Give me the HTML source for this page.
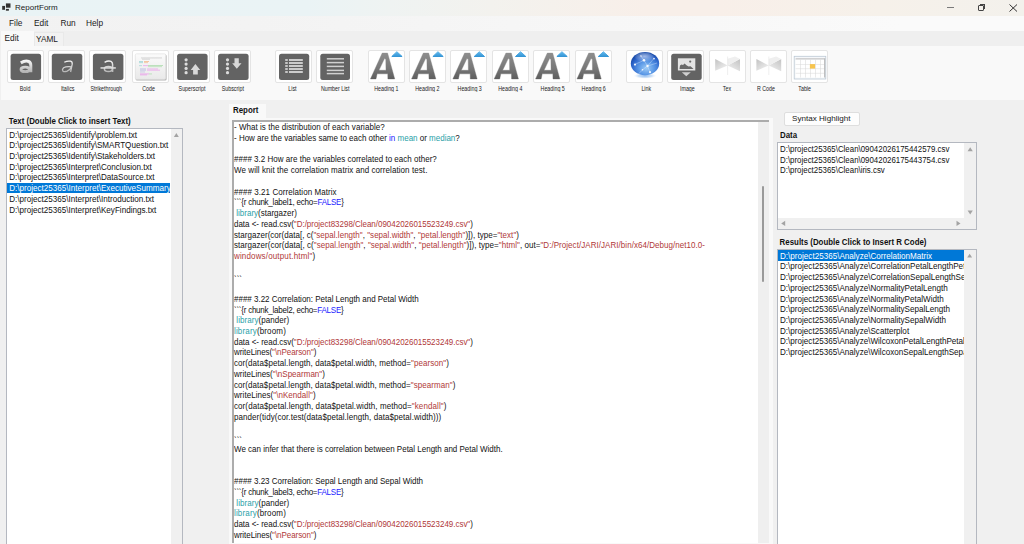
<!DOCTYPE html>
<html><head><meta charset="utf-8">
<style>
*{box-sizing:border-box;margin:0;padding:0}
html,body{width:1024px;height:544px;overflow:hidden;background:#f0f0f0;font-family:"Liberation Sans",sans-serif;color:#1a1a1a}
.a{position:absolute}
.t{position:absolute;white-space:pre;line-height:1}
#title{left:0;top:0;width:1024px;height:15.5px;background:linear-gradient(90deg,#e9f3f5 0%,#eaf3f5 30%,#eff3f2 38%,#f3f2ee 48%,#f8efe9 63%,#f8efe9 70%,#f6f1ea 86%,#f3f1ec 100%)}
#menu{left:0;top:15.5px;width:1024px;height:15px;background:linear-gradient(90deg,#f2f2f2 0%,#f3f3f3 25%,#f6f6f6 50%,#fafafa 88%,#fafafa 100%)}
#tabrow{left:0;top:30.5px;width:1024px;height:15px;background:#efefef}
#toolbar{left:1px;top:45.5px;width:1023px;height:54px;background:#f9f9f9}
.btn{position:absolute;top:50px;width:37px;height:33px;background:#fff;border:1px solid #e4e4e4;border-radius:2px}
.lbl{position:absolute;top:85.6px;font-size:5.3px;color:#1a1a1a;white-space:pre;line-height:1;transform:scaleY(1.2);transform-origin:0 0}
.ico{position:absolute;left:3px;top:3px;width:30.5px;height:27px;background:#636363;border-radius:2.5px}
.lb{position:absolute;background:#fff;border:1px solid #b4b8c0}
.item{position:absolute;left:2px;font-size:8.1px;white-space:pre;line-height:1;color:#1e1e1e}
.bold{font-weight:bold;font-size:7.9px;color:#111;transform:scaleY(1.1);transform-origin:0 6.7px}
.code{position:absolute;left:234px;font-size:8px;white-space:pre;line-height:1;color:#1e1e1e}
.s{color:#b03838}.k{color:#2222ff}.f{color:#2aa1a8}
</style></head><body>
<div id="title" class="a"></div>
<svg class="a" style="left:0;top:0" width="14" height="14"><rect x="5.9" y="3.4" width="4.6" height="4.3" fill="#333"/><rect x="2.2" y="5.9" width="2.8" height="3.9" fill="#333"/><rect x="5.9" y="8.9" width="3" height="1.8" fill="#333"/></svg>
<div class="t" style="left:15px;top:4px;font-size:8px;color:#1a1a1a">ReportForm</div>
<div class="a" style="left:947px;top:7px;width:7px;height:1px;background:#7a7a7a"></div>
<div class="a" style="left:978px;top:5px;width:6px;height:6px;border:1px solid #444;border-radius:1px"></div>
<div class="a" style="left:980px;top:4px;width:5px;height:5px;border-top:1px solid #444;border-right:1px solid #444"></div>
<svg class="a" style="left:1009px;top:4px" width="9" height="8"><path d="M0.5 0.5L8 7.5M8 0.5L0.5 7.5" stroke="#333" stroke-width="1"/></svg>

<div id="menu" class="a"></div>
<div class="t" style="left:9px;top:19.3px;font-size:8.3px">File</div>
<div class="t" style="left:34px;top:19.3px;font-size:8.3px">Edit</div>
<div class="t" style="left:60.5px;top:19.3px;font-size:8.3px">Run</div>
<div class="t" style="left:86px;top:19.3px;font-size:8.3px">Help</div>

<div id="tabrow" class="a"></div>
<div class="a" style="left:1px;top:31px;width:33px;height:15px;background:#f9f9f9"></div>
<div class="a" style="left:34px;top:32px;width:30px;height:14px;background:#f2f2f2;border:1px solid #e9e9e9;border-bottom:none"></div>
<div class="t" style="left:4.5px;top:33.6px;font-size:8.3px">Edit</div>
<div class="t" style="left:36px;top:34.8px;font-size:8.3px">YAML</div>

<div id="toolbar" class="a"></div>
<!-- TOOLBAR -->
<div class="btn" style="left:6.95px"></div>
<div class="lbl" style="left:19.8px">Bold</div>
<div class="btn" style="left:48.15px"></div>
<div class="lbl" style="left:60.9px">Italics</div>
<div class="btn" style="left:89.45px"></div>
<div class="lbl" style="left:90.5px">Strikethrough</div>
<div class="btn" style="left:131.85px"></div>
<div class="lbl" style="left:142.3px">Code</div>
<div class="btn" style="left:173.05px"></div>
<div class="lbl" style="left:178.6px">Superscript</div>
<div class="btn" style="left:214.45px"></div>
<div class="lbl" style="left:221.8px">Subscript</div>
<div class="btn" style="left:275.15px"></div>
<div class="lbl" style="left:288.3px">List</div>
<div class="btn" style="left:316.25px"></div>
<div class="lbl" style="left:320.9px">Number List</div>
<div class="btn" style="left:368.05px"></div>
<div class="lbl" style="left:374.3px">Heading 1</div>
<div class="btn" style="left:409.15px"></div>
<div class="lbl" style="left:415.3px">Heading 2</div>
<div class="btn" style="left:450.45px"></div>
<div class="lbl" style="left:457.6px">Heading 3</div>
<div class="btn" style="left:491.75px"></div>
<div class="lbl" style="left:498.2px">Heading 4</div>
<div class="btn" style="left:533.15px"></div>
<div class="lbl" style="left:540.6px">Heading 5</div>
<div class="btn" style="left:574.55px"></div>
<div class="lbl" style="left:581.6px">Heading 6</div>
<div class="btn" style="left:625.95px"></div>
<div class="lbl" style="left:641.4px">Link</div>
<div class="btn" style="left:667.35px"></div>
<div class="lbl" style="left:680px">Image</div>
<div class="btn" style="left:708.95px"></div>
<div class="lbl" style="left:722.8px">Tex</div>
<div class="btn" style="left:750.05px"></div>
<div class="lbl" style="left:757px">R Code</div>
<div class="btn" style="left:791.35px"></div>
<div class="lbl" style="left:798.3px">Table</div>
<svg class="a" style="left:0;top:0" width="1024" height="100" viewBox="0 0 1024 100">
<defs>
<linearGradient id="gw" x1="0" y1="0" x2="0" y2="1"><stop offset="0" stop-color="#fafafa"/><stop offset="1" stop-color="#b9b9b9"/></linearGradient>
<linearGradient id="gwu" gradientUnits="userSpaceOnUse" x1="0" y1="60" x2="0" y2="73"><stop offset="0" stop-color="#f8f8f8"/><stop offset="1" stop-color="#b0b0b0"/></linearGradient>
<linearGradient id="gA" gradientUnits="userSpaceOnUse" x1="0" y1="53" x2="0" y2="79"><stop offset="0" stop-color="#8e8e8e"/><stop offset="0.6" stop-color="#777"/><stop offset="1" stop-color="#5e5e5e"/></linearGradient>
<linearGradient id="gB" x1="0" y1="0" x2="0" y2="1"><stop offset="0" stop-color="#62b8ec"/><stop offset="1" stop-color="#3596d6"/></linearGradient>
<radialGradient id="gG" cx="0.55" cy="0.7" r="0.62"><stop offset="0" stop-color="#9ccaf6"/><stop offset="0.45" stop-color="#5a98e6"/><stop offset="0.85" stop-color="#2a62c8"/><stop offset="1" stop-color="#1c4fae"/></radialGradient>
<radialGradient id="gH" cx="0.5" cy="0.4" r="0.6"><stop offset="0" stop-color="#ffffff" stop-opacity="0.55"/><stop offset="1" stop-color="#ffffff" stop-opacity="0"/></radialGradient>
<radialGradient id="gS" cx="0.5" cy="0.5" r="0.5"><stop offset="0" stop-color="#8ab8ee"/><stop offset="0.6" stop-color="#b8d4f4" stop-opacity="0.7"/><stop offset="1" stop-color="#e8f0fa" stop-opacity="0"/></radialGradient>
<linearGradient id="gC" x1="0" y1="0" x2="0" y2="1"><stop offset="0" stop-color="#fbfbfb"/><stop offset="1" stop-color="#e9e9e9"/></linearGradient>
<linearGradient id="gT" x1="0" y1="0" x2="0.8" y2="1"><stop offset="0" stop-color="#c2c2c2"/><stop offset="1" stop-color="#f2f2f2"/></linearGradient>
<linearGradient id="gT2" x1="1" y1="0" x2="0.2" y2="1"><stop offset="0" stop-color="#c2c2c2"/><stop offset="1" stop-color="#f0f0f0"/></linearGradient>
</defs>
<rect x="10.6" y="53.7" width="30.50" height="26.3" rx="2.5" fill="#636363"/>
<g fill="none" stroke="url(#gwu)"><path d="M20.8 62.9 Q25.2 60.3 28.6 61.5 Q30.8 62.4 30.8 65.2 L30.8 72.2" stroke-width="3"/><ellipse cx="25.2" cy="69.4" rx="4.2" ry="2.2" stroke-width="2.8"/></g>
<rect x="51.8" y="53.7" width="30.50" height="26.3" rx="2.5" fill="#636363"/>
<g fill="none" stroke="url(#gwu)" stroke-width="1.3"><path d="M64.3 62.3 Q67.5 60.6 70.5 61.2 Q72.6 61.8 72.2 64.2 L70.6 72"/><path d="M71.4 66.8 Q66 66.3 63.6 67.8 Q61.8 69.3 62.8 70.9 Q64.2 72.2 67.2 71.1 Q70.2 69.8 71.2 67.5"/></g>
<rect x="92.9" y="53.7" width="30.50" height="26.3" rx="2.5" fill="#636363"/>
<g fill="none" stroke="url(#gwu)" stroke-width="1.5"><path d="M104.6 62.4 Q108 60.4 111 61.4 Q112.6 62.1 112.6 64.6 L112.6 72"/><ellipse cx="108.4" cy="69" rx="4" ry="2.5"/></g>
<rect x="100.5" y="67.2" width="15.3" height="1.5" fill="#e0e0e0"/>
<rect x="135.6" y="54.6" width="31" height="26" rx="1.5" fill="#b4b4b4"/>
<rect x="135.2" y="53.8" width="30.6" height="25.6" rx="1.5" fill="url(#gC)" stroke="#dadada" stroke-width="0.5"/>
<rect x="141" y="57.6" width="21" height="0.7" fill="#9a9a9a" opacity="0.5"/>
<rect x="142" y="58.8" width="8" height="0.7" fill="#a0a0a0" opacity="0.5"/>
<rect x="139" y="61.2" width="4" height="0.7" fill="#7cc8c8" opacity="0.8"/>
<rect x="139" y="62.4" width="4" height="0.7" fill="#7cc8c8" opacity="0.8"/>
<rect x="144" y="61.2" width="5" height="0.7" fill="#f0a060" opacity="0.8"/>
<rect x="144" y="62.4" width="4" height="0.7" fill="#f0a060" opacity="0.7"/>
<rect x="139" y="65.4" width="3" height="0.7" fill="#7cc8c8" opacity="0.7"/>
<rect x="143" y="65.4" width="5" height="0.7" fill="#e870e8" opacity="0.7"/>
<rect x="148" y="65.2" width="15" height="0.7" fill="#70c870" opacity="0.6"/>
<rect x="148" y="66.4" width="14" height="0.7" fill="#70c870" opacity="0.5"/>
<rect x="140" y="68.6" width="6" height="0.7" fill="#9a9ad8" opacity="0.7"/>
<rect x="140" y="69.8" width="6" height="0.7" fill="#9a9ad8" opacity="0.6"/>
<rect x="147" y="68.6" width="11" height="0.7" fill="#e870e8" opacity="0.6"/>
<rect x="147" y="69.8" width="13" height="0.7" fill="#e870e8" opacity="0.6"/>
<rect x="140" y="71.6" width="5" height="0.7" fill="#9a9ad8" opacity="0.6"/>
<rect x="140" y="73.6" width="9" height="0.7" fill="#e870e8" opacity="0.7"/>
<rect x="140" y="74.6" width="7" height="0.7" fill="#e870e8" opacity="0.6"/>
<rect x="149" y="73.6" width="3" height="0.7" fill="#80d080" opacity="0.6"/>
<rect x="177.1" y="53.7" width="30.50" height="26.3" rx="2.5" fill="#636363"/>
<circle cx="186.1" cy="59.8" r="1.6" fill="#dcdcdc"/>
<circle cx="186.1" cy="64.1" r="1.6" fill="#dcdcdc"/>
<circle cx="186.1" cy="68.4" r="1.6" fill="#dcdcdc"/>
<circle cx="186.1" cy="72.7" r="1.6" fill="#dcdcdc"/>
<path d="M195.4 64 L200.2 70 L197.8 70 L197.8 74.6 L193.1 74.6 L193.1 70 L190.7 70 Z" fill="#d8d8d8"/>
<rect x="218.1" y="53.7" width="30.50" height="26.3" rx="2.5" fill="#636363"/>
<circle cx="227.5" cy="59.8" r="1.6" fill="#dcdcdc"/>
<circle cx="227.5" cy="64.1" r="1.6" fill="#dcdcdc"/>
<circle cx="227.5" cy="68.4" r="1.6" fill="#dcdcdc"/>
<circle cx="227.5" cy="72.7" r="1.6" fill="#dcdcdc"/>
<path d="M234.5 58.2 L238.8 58.2 L238.8 63.3 L241.5 63.3 L236.8 68.8 L232.2 63.3 L234.5 63.3 Z" fill="#d8d8d8"/>
<rect x="279" y="53.7" width="30.20" height="26.3" rx="2.5" fill="#636363"/>
<rect x="285.2" y="59.1" width="2.6" height="1.8" fill="#d0d0d0"/>
<rect x="289" y="59.1" width="13.8" height="1.8" fill="#d8d8d8"/>
<rect x="285.2" y="62.1" width="2.6" height="1.8" fill="#d0d0d0"/>
<rect x="289" y="62.1" width="13.8" height="1.8" fill="#d8d8d8"/>
<rect x="285.2" y="65.1" width="2.6" height="1.8" fill="#d0d0d0"/>
<rect x="289" y="65.1" width="13.8" height="1.8" fill="#d8d8d8"/>
<rect x="285.2" y="68.1" width="2.6" height="1.8" fill="#d0d0d0"/>
<rect x="289" y="68.1" width="13.8" height="1.8" fill="#d8d8d8"/>
<rect x="285.2" y="71.1" width="2.6" height="1.8" fill="#d0d0d0"/>
<rect x="289" y="71.1" width="13.8" height="1.8" fill="#d8d8d8"/>
<rect x="320.3" y="53.7" width="29.70" height="26.3" rx="2.5" fill="#636363"/>
<rect x="326.8" y="58.05" width="17.2" height="1.5" fill="#d0d0d0"/>
<rect x="326.8" y="61.85" width="17.2" height="1.5" fill="#d0d0d0"/>
<rect x="326.8" y="65.65" width="17.2" height="1.5" fill="#d0d0d0"/>
<rect x="326.8" y="69.65" width="17.2" height="1.5" fill="#d0d0d0"/>
<rect x="326.8" y="72.85" width="17.2" height="1.5" fill="#d0d0d0"/>
<g transform="translate(-0.10,0)"><path fill-rule="evenodd" fill="url(#gA)" stroke="url(#gA)" stroke-width="0.4" stroke-linejoin="round" d="M370.6 78.9 L382.3 53.1 L387.7 53.1 L394.8 78.9 L388 78.9 L387.9 73.8 L377.2 73.8 L376.1 78.9 Z M379 70.3 L386.1 70.3 L385.9 59.2 L384.6 58.6 Z"/><path fill="url(#gB)" stroke="url(#gB)" stroke-width="1" stroke-linejoin="round" d="M396.95 51.7 L402.2 56.5 L391.9 56.5 Z"/></g>
<g transform="translate(41.00,0)"><path fill-rule="evenodd" fill="url(#gA)" stroke="url(#gA)" stroke-width="0.4" stroke-linejoin="round" d="M370.6 78.9 L382.3 53.1 L387.7 53.1 L394.8 78.9 L388 78.9 L387.9 73.8 L377.2 73.8 L376.1 78.9 Z M379 70.3 L386.1 70.3 L385.9 59.2 L384.6 58.6 Z"/><path fill="url(#gB)" stroke="url(#gB)" stroke-width="1" stroke-linejoin="round" d="M396.95 51.7 L402.2 56.5 L391.9 56.5 Z"/></g>
<g transform="translate(82.30,0)"><path fill-rule="evenodd" fill="url(#gA)" stroke="url(#gA)" stroke-width="0.4" stroke-linejoin="round" d="M370.6 78.9 L382.3 53.1 L387.7 53.1 L394.8 78.9 L388 78.9 L387.9 73.8 L377.2 73.8 L376.1 78.9 Z M379 70.3 L386.1 70.3 L385.9 59.2 L384.6 58.6 Z"/><path fill="url(#gB)" stroke="url(#gB)" stroke-width="1" stroke-linejoin="round" d="M396.95 51.7 L402.2 56.5 L391.9 56.5 Z"/></g>
<g transform="translate(123.60,0)"><path fill-rule="evenodd" fill="url(#gA)" stroke="url(#gA)" stroke-width="0.4" stroke-linejoin="round" d="M370.6 78.9 L382.3 53.1 L387.7 53.1 L394.8 78.9 L388 78.9 L387.9 73.8 L377.2 73.8 L376.1 78.9 Z M379 70.3 L386.1 70.3 L385.9 59.2 L384.6 58.6 Z"/><path fill="url(#gB)" stroke="url(#gB)" stroke-width="1" stroke-linejoin="round" d="M396.95 51.7 L402.2 56.5 L391.9 56.5 Z"/></g>
<g transform="translate(165.00,0)"><path fill-rule="evenodd" fill="url(#gA)" stroke="url(#gA)" stroke-width="0.4" stroke-linejoin="round" d="M370.6 78.9 L382.3 53.1 L387.7 53.1 L394.8 78.9 L388 78.9 L387.9 73.8 L377.2 73.8 L376.1 78.9 Z M379 70.3 L386.1 70.3 L385.9 59.2 L384.6 58.6 Z"/><path fill="url(#gB)" stroke="url(#gB)" stroke-width="1" stroke-linejoin="round" d="M396.95 51.7 L402.2 56.5 L391.9 56.5 Z"/></g>
<g transform="translate(206.40,0)"><path fill-rule="evenodd" fill="url(#gA)" stroke="url(#gA)" stroke-width="0.4" stroke-linejoin="round" d="M370.6 78.9 L382.3 53.1 L387.7 53.1 L394.8 78.9 L388 78.9 L387.9 73.8 L377.2 73.8 L376.1 78.9 Z M379 70.3 L386.1 70.3 L385.9 59.2 L384.6 58.6 Z"/><path fill="url(#gB)" stroke="url(#gB)" stroke-width="1" stroke-linejoin="round" d="M396.95 51.7 L402.2 56.5 L391.9 56.5 Z"/></g>
<ellipse cx="645" cy="75.8" rx="11.5" ry="3" fill="url(#gS)"/>
<ellipse cx="645" cy="63.6" rx="14.2" ry="11.7" fill="url(#gG)"/>
<ellipse cx="644.5" cy="57.3" rx="9.5" ry="4.8" fill="url(#gH)"/>
<path d="M634.5 64.6 L644 60.3 L647.5 66 L653.8 58.6 M644 60.3 L640.5 55.5 M647.5 66 L650 72.2 M647.5 66 L642.5 69.8 L638.5 74 M647.5 66 L657 63" stroke="#e4f0ff" stroke-width="0.5" fill="none" opacity="0.75"/>
<circle cx="644" cy="60.3" r="1.3" fill="#ffffff" opacity="0.9"/>
<circle cx="647.5" cy="66" r="1.2" fill="#ffffff" opacity="0.9"/>
<circle cx="635" cy="64.6" r="1.1" fill="#ffffff" opacity="0.9"/>
<circle cx="650" cy="72.2" r="1.1" fill="#ffffff" opacity="0.9"/>
<circle cx="654" cy="58.6" r="0.9" fill="#ffffff" opacity="0.9"/>
<circle cx="641" cy="56" r="0.7" fill="#ffffff" opacity="0.9"/>
<circle cx="642.5" cy="69.8" r="0.8" fill="#ffffff" opacity="0.9"/>
<rect x="671.2" y="53.7" width="30.50" height="26.3" rx="2.5" fill="#636363"/>
<rect x="677.9" y="58.3" width="17.4" height="12.2" fill="#e4e4e4"/>
<path d="M679.5 69 L680 65.5 L681.5 64.4 L683 65 L684.6 63.5 L686.5 65.3 L688.5 66.5 L690.5 66.3 L692.5 68 L693.5 69 Z" fill="#6a6a6a"/>
<circle cx="690.2" cy="61.6" r="1.1" fill="#6a6a6a"/>
<path d="M681.8 72.2 L690.8 72.2 L686.3 76.3 Z" fill="#cfcfcf"/>
<g transform="translate(0,0)"><path d="M715.2 59 L727.6 65.4 L715.2 70.8 Z" fill="url(#gT)"/><path d="M740 59 L727.6 65.4 L740 71.2 Z" fill="url(#gT2)"/><path d="M727.6 58.8 L735 56.6 L740 59 L727.6 65.4 Z" fill="#efefef"/><path d="M727.6 56.5 L727.6 75" stroke="#dedede" stroke-width="0.5"/></g>
<g transform="translate(41.2,0)"><path d="M715.2 59 L727.6 65.4 L715.2 70.8 Z" fill="url(#gT)"/><path d="M740 59 L727.6 65.4 L740 71.2 Z" fill="url(#gT2)"/><path d="M727.6 58.8 L735 56.6 L740 59 L727.6 65.4 Z" fill="#efefef"/><path d="M727.6 56.5 L727.6 75" stroke="#dedede" stroke-width="0.5"/></g>
<rect x="794.2" y="56.3" width="31.6" height="22.7" fill="#f6f8fb" stroke="#bcc8d4" stroke-width="0.8"/>
<rect x="795.6" y="58.2" width="28.6" height="1.5" fill="#c8c8c8"/>
<rect x="795.6" y="59.7" width="28.6" height="17.8" fill="#ffffff"/>
<rect x="800.3" y="59.7" width="0.5" height="17.8" fill="#d4d4d4"/>
<rect x="805.4" y="59.7" width="0.5" height="17.8" fill="#d4d4d4"/>
<rect x="810.4" y="59.7" width="0.5" height="17.8" fill="#d4d4d4"/>
<rect x="815.3" y="59.7" width="0.5" height="17.8" fill="#d4d4d4"/>
<rect x="820.2" y="59.7" width="0.5" height="17.8" fill="#d4d4d4"/>
<rect x="795.6" y="64.1" width="28.6" height="0.5" fill="#d8d8d8"/>
<rect x="795.6" y="68.6" width="28.6" height="0.5" fill="#d8d8d8"/>
<rect x="795.6" y="72.9" width="28.6" height="0.5" fill="#d8d8d8"/>
<rect x="824.3" y="58.2" width="0.9" height="19.3" fill="#a8a8a8"/>
<rect x="809.9" y="64.1" width="5.2" height="4.5" fill="#f7c44e"/>
</svg>
<!-- /TOOLBAR -->

<!-- LEFT -->
<div class="t bold" style="left:8.7px;top:117.5px">Text (Double Click to insert Text)</div>
<div class="lb" style="left:6px;top:128px;width:177px;height:430px"></div>
<div class="a" style="left:171px;top:129px;width:11px;height:420px;background:#f0f0f0"></div>
<svg class="a" style="left:171px;top:129px" width="11" height="10"><path d="M2.9 7.9 L7.8 7.9 L5.35 4 Z" fill="#a3a3a3"/></svg>

<!-- REPORT -->
<div class="a" style="left:228.5px;top:117.5px;width:544px;height:440px;background:#f9f9f9"></div>
<div class="a" style="left:228.8px;top:104px;width:37px;height:14px;background:#f9f9f9"></div>
<div class="t bold" style="left:233px;top:106.5px">Report</div>
<div class="a" style="left:232px;top:120px;width:537px;height:422.5px;background:#fff;border-left:2px solid #acacac;border-top:2px solid #acacac"></div>
<div class="a" style="left:758px;top:122px;width:10.8px;height:420.5px;background:#efefef"></div>
<div class="a" style="left:761.9px;top:186px;width:2.1px;height:96px;background:#9a9a9a;border-radius:1px"></div>
<!-- CODE -->
<div id="code"><div class="t" style="left:234px;top:123.30px;font-size:8px;letter-spacing:0.039px;line-height:10.72px;color:#111;transform:scaleY(1.1);transform-origin:0 8.1px">- What is the distribution of each variable?</div>
<div class="t" style="left:234px;top:134.02px;font-size:8px;letter-spacing:-0.003px;line-height:10.72px;color:#111;transform:scaleY(1.1);transform-origin:0 8.1px">- How are the variables same to each other <span class="k">in</span> <span class="f">mean</span> or <span class="f">median</span>?</div>
<div class="t" style="left:234px;top:155.46px;font-size:8px;letter-spacing:0.016px;line-height:10.72px;color:#111;transform:scaleY(1.1);transform-origin:0 8.1px">#### 3.2 How are the variables correlated to each other?</div>
<div class="t" style="left:234px;top:166.18px;font-size:8px;letter-spacing:0.073px;line-height:10.72px;color:#111;transform:scaleY(1.1);transform-origin:0 8.1px">We will knit the correlation matrix and correlation test.</div>
<div class="t" style="left:234px;top:187.62px;font-size:8px;letter-spacing:0.059px;line-height:10.72px;color:#111;transform:scaleY(1.1);transform-origin:0 8.1px">#### 3.21 Correlation Matrix</div>
<div class="t" style="left:234px;top:198.34px;font-size:8px;letter-spacing:-0.230px;line-height:10.72px;color:#111;transform:scaleY(1.1);transform-origin:0 8.1px">```{r chunk_label1, echo=<span class="k">FALSE</span>}</div>
<div class="t" style="left:234px;top:209.06px;font-size:8px;letter-spacing:0.006px;line-height:10.72px;color:#111;transform:scaleY(1.1);transform-origin:0 8.1px"> <span class="f">library</span>(stargazer)</div>
<div class="t" style="left:234px;top:219.78px;font-size:8px;letter-spacing:-0.023px;line-height:10.72px;color:#111;transform:scaleY(1.1);transform-origin:0 8.1px">data &lt;- read.csv(<span class="s">&quot;D:/project83298/Clean/09042026015523249.csv&quot;</span>)</div>
<div class="t" style="left:234px;top:230.50px;font-size:8px;letter-spacing:0.032px;line-height:10.72px;color:#111;transform:scaleY(1.1);transform-origin:0 8.1px">stargazer(cor(data[, c(<span class="s">&quot;sepal.length&quot;</span>, <span class="s">&quot;sepal.width&quot;</span>, <span class="s">&quot;petal.length&quot;</span>)]), type=<span class="s">&quot;text&quot;</span>)</div>
<div class="t" style="left:234px;top:241.22px;font-size:8px;letter-spacing:0.049px;line-height:10.72px;color:#111;transform:scaleY(1.1);transform-origin:0 8.1px">stargazer(cor(data[, c(<span class="s">&quot;sepal.length&quot;</span>, <span class="s">&quot;sepal.width&quot;</span>, <span class="s">&quot;petal.length&quot;</span>)]), type=<span class="s">&quot;html&quot;</span>, out=<span class="s">&quot;D:/Project/JARI/JARI/bin/x64/Debug/net10.0-</span></div>
<div class="t" style="left:234px;top:251.94px;font-size:8px;letter-spacing:0.153px;line-height:10.72px;color:#111;transform:scaleY(1.1);transform-origin:0 8.1px"><span class="s">windows/output.html&quot;</span>)</div>
<div class="t" style="left:234px;top:274.88px;font-size:8px;letter-spacing:0.017px;line-height:10.72px;color:#111;transform:scaleY(1.1);transform-origin:0 8.1px">```</div>
<div class="t" style="left:234px;top:294.82px;font-size:8px;letter-spacing:-0.008px;line-height:10.72px;color:#111;transform:scaleY(1.1);transform-origin:0 8.1px">#### 3.22 Correlation: Petal Length and Petal Width</div>
<div class="t" style="left:234px;top:305.54px;font-size:8px;letter-spacing:-0.235px;line-height:10.72px;color:#111;transform:scaleY(1.1);transform-origin:0 8.1px">```{r chunk_label2, echo=<span class="k">FALSE</span>}</div>
<div class="t" style="left:234px;top:316.26px;font-size:8px;letter-spacing:0.066px;line-height:10.72px;color:#111;transform:scaleY(1.1);transform-origin:0 8.1px"> <span class="f">library</span>(pander)</div>
<div class="t" style="left:234px;top:326.98px;font-size:8px;letter-spacing:0.156px;line-height:10.72px;color:#111;transform:scaleY(1.1);transform-origin:0 8.1px"><span class="f">library</span>(broom)</div>
<div class="t" style="left:234px;top:337.70px;font-size:8px;letter-spacing:-0.023px;line-height:10.72px;color:#111;transform:scaleY(1.1);transform-origin:0 8.1px">data &lt;- read.csv(<span class="s">&quot;D:/project83298/Clean/09042026015523249.csv&quot;</span>)</div>
<div class="t" style="left:234px;top:348.42px;font-size:8px;letter-spacing:-0.052px;line-height:10.72px;color:#111;transform:scaleY(1.1);transform-origin:0 8.1px">writeLines(<span class="s">&quot;\nPearson&quot;</span>)</div>
<div class="t" style="left:234px;top:359.14px;font-size:8px;letter-spacing:0.069px;line-height:10.72px;color:#111;transform:scaleY(1.1);transform-origin:0 8.1px">cor(data$petal.length, data$petal.width, method=<span class="s">&quot;pearson&quot;</span>)</div>
<div class="t" style="left:234px;top:369.86px;font-size:8px;letter-spacing:0.008px;line-height:10.72px;color:#111;transform:scaleY(1.1);transform-origin:0 8.1px">writeLines(<span class="s">&quot;\nSpearman&quot;</span>)</div>
<div class="t" style="left:234px;top:380.58px;font-size:8px;letter-spacing:0.065px;line-height:10.72px;color:#111;transform:scaleY(1.1);transform-origin:0 8.1px">cor(data$petal.length, data$petal.width, method=<span class="s">&quot;spearman&quot;</span>)</div>
<div class="t" style="left:234px;top:391.30px;font-size:8px;letter-spacing:0.053px;line-height:10.72px;color:#111;transform:scaleY(1.1);transform-origin:0 8.1px">writeLines(<span class="s">&quot;\nKendall&quot;</span>)</div>
<div class="t" style="left:234px;top:402.02px;font-size:8px;letter-spacing:0.087px;line-height:10.72px;color:#111;transform:scaleY(1.1);transform-origin:0 8.1px">cor(data$petal.length, data$petal.width, method=<span class="s">&quot;kendall&quot;</span>)</div>
<div class="t" style="left:234px;top:412.74px;font-size:8px;letter-spacing:0.067px;line-height:10.72px;color:#111;transform:scaleY(1.1);transform-origin:0 8.1px">pander(tidy(cor.test(data$petal.length, data$petal.width)))</div>
<div class="t" style="left:234px;top:435.68px;font-size:8px;letter-spacing:0.017px;line-height:10.72px;color:#111;transform:scaleY(1.1);transform-origin:0 8.1px">```</div>
<div class="t" style="left:234px;top:444.90px;font-size:8px;letter-spacing:-0.004px;line-height:10.72px;color:#111;transform:scaleY(1.1);transform-origin:0 8.1px">We can infer that there is correlation between Petal Length and Petal Width.</div>
<div class="t" style="left:234px;top:477.06px;font-size:8px;letter-spacing:-0.008px;line-height:10.72px;color:#111;transform:scaleY(1.1);transform-origin:0 8.1px">#### 3.23 Correlation: Sepal Length and Sepal Width</div>
<div class="t" style="left:234px;top:487.78px;font-size:8px;letter-spacing:-0.235px;line-height:10.72px;color:#111;transform:scaleY(1.1);transform-origin:0 8.1px">```{r chunk_label3, echo=<span class="k">FALSE</span>}</div>
<div class="t" style="left:234px;top:498.50px;font-size:8px;letter-spacing:0.066px;line-height:10.72px;color:#111;transform:scaleY(1.1);transform-origin:0 8.1px"> <span class="f">library</span>(pander)</div>
<div class="t" style="left:234px;top:509.22px;font-size:8px;letter-spacing:0.156px;line-height:10.72px;color:#111;transform:scaleY(1.1);transform-origin:0 8.1px"><span class="f">library</span>(broom)</div>
<div class="t" style="left:234px;top:519.94px;font-size:8px;letter-spacing:-0.023px;line-height:10.72px;color:#111;transform:scaleY(1.1);transform-origin:0 8.1px">data &lt;- read.csv(<span class="s">&quot;D:/project83298/Clean/09042026015523249.csv&quot;</span>)</div>
<div class="t" style="left:234px;top:530.66px;font-size:8px;letter-spacing:-0.052px;line-height:10.72px;color:#111;transform:scaleY(1.1);transform-origin:0 8.1px">writeLines(<span class="s">&quot;\nPearson&quot;</span>)</div></div>

<!-- RIGHT -->
<div class="a" style="left:783.5px;top:111.5px;width:76.5px;height:14.5px;background:#fdfdfd;border:1px solid #dedede;border-radius:2px"></div>
<div class="t" style="left:792px;top:115px;font-size:8.1px">Syntax Highlight</div>
<div class="t bold" style="left:780px;top:132px">Data</div>
<div class="lb" style="left:777px;top:142px;width:200px;height:88px"></div>
<div class="a" style="left:964.3px;top:143px;width:11.7px;height:86px;background:#f0f0f0"></div>
<div class="a" style="left:778px;top:218.4px;width:198px;height:10.6px;background:#f0f0f0"></div>
<svg class="a" style="left:777px;top:142px" width="200" height="88">
<path d="M190.6 9.3 L195.8 9.3 L193.2 5.3 Z" fill="#a3a3a3"/>
<path d="M190.6 68.5 L195.8 68.5 L193.2 72.5 Z" fill="#a3a3a3"/>
<path d="M8.2 84 L4.2 81.4 L8.2 78.8 Z" fill="#a3a3a3"/>
<path d="M179.5 84 L183.5 81.4 L179.5 78.8 Z" fill="#a3a3a3"/>
</svg>
<div class="t bold" style="left:779.6px;top:238.5px">Results (Double Click to Insert R Code)</div>
<div class="lb" style="left:777px;top:249px;width:200px;height:310px"></div>
<div class="a" style="left:964.3px;top:250px;width:11.7px;height:300px;background:#f0f0f0"></div>
<svg class="a" style="left:964.3px;top:249px" width="12" height="12"><path d="M3.2 8.6 L8.1 8.6 L5.65 4.7 Z" fill="#a3a3a3"/></svg>
<!-- LISTS -->
<div class="t" style="left:9.2px;top:130.58px;font-size:8.1px;line-height:10.72px;color:#111;width:161.5px;overflow:hidden;transform:scaleY(1.1);transform-origin:0 8.2px">D:\project25365\Identify\problem.txt</div>
<div class="t" style="left:9.2px;top:141.30px;font-size:8.1px;line-height:10.72px;color:#111;width:161.5px;overflow:hidden;transform:scaleY(1.1);transform-origin:0 8.2px">D:\project25365\Identify\SMARTQuestion.txt</div>
<div class="t" style="left:9.2px;top:152.02px;font-size:8.1px;line-height:10.72px;color:#111;width:161.5px;overflow:hidden;transform:scaleY(1.1);transform-origin:0 8.2px">D:\project25365\Identify\Stakeholders.txt</div>
<div class="t" style="left:9.2px;top:162.74px;font-size:8.1px;line-height:10.72px;color:#111;width:161.5px;overflow:hidden;transform:scaleY(1.1);transform-origin:0 8.2px">D:\project25365\Interpret\Conclusion.txt</div>
<div class="t" style="left:9.2px;top:173.46px;font-size:8.1px;line-height:10.72px;color:#111;width:161.5px;overflow:hidden;transform:scaleY(1.1);transform-origin:0 8.2px">D:\project25365\Interpret\DataSource.txt</div>
<div class="a" style="left:7.3999999999999995px;top:182.90px;width:163px;height:10.2px;background:#0078d7"></div>
<div class="t" style="left:9.2px;top:184.18px;font-size:8.1px;line-height:10.72px;color:#fff;width:161.5px;overflow:hidden;transform:scaleY(1.1);transform-origin:0 8.2px">D:\project25365\Interpret\ExecutiveSummary.txt</div>
<div class="t" style="left:9.2px;top:194.90px;font-size:8.1px;line-height:10.72px;color:#111;width:161.5px;overflow:hidden;transform:scaleY(1.1);transform-origin:0 8.2px">D:\project25365\Interpret\Introduction.txt</div>
<div class="t" style="left:9.2px;top:205.62px;font-size:8.1px;line-height:10.72px;color:#111;width:161.5px;overflow:hidden;transform:scaleY(1.1);transform-origin:0 8.2px">D:\project25365\Interpret\KeyFindings.txt</div>
<div class="t" style="left:780px;top:144.80px;font-size:7.9px;line-height:10.72px;color:#111;width:183.5px;overflow:hidden;transform:scaleY(1.1);transform-origin:0 8.2px">D:\project25365\Clean\09042026175442579.csv</div>
<div class="t" style="left:780px;top:155.52px;font-size:7.9px;line-height:10.72px;color:#111;width:183.5px;overflow:hidden;transform:scaleY(1.1);transform-origin:0 8.2px">D:\project25365\Clean\09042026175443754.csv</div>
<div class="t" style="left:780px;top:166.24px;font-size:7.9px;line-height:10.72px;color:#111;width:183.5px;overflow:hidden;transform:scaleY(1.1);transform-origin:0 8.2px">D:\project25365\Clean\iris.csv</div>
<div class="a" style="left:778.2px;top:250.45px;width:185.5px;height:10.2px;background:#0078d7"></div>
<div class="t" style="left:780px;top:251.73px;font-size:8.1px;line-height:10.72px;color:#fff;width:184.0px;overflow:hidden;transform:scaleY(1.1);transform-origin:0 8.2px">D:\project25365\Analyze\CorrelationMatrix</div>
<div class="t" style="left:780px;top:262.45px;font-size:8.1px;line-height:10.72px;color:#111;width:184.0px;overflow:hidden;transform:scaleY(1.1);transform-origin:0 8.2px">D:\project25365\Analyze\CorrelationPetalLengthPetalWidth</div>
<div class="t" style="left:780px;top:273.17px;font-size:8.1px;line-height:10.72px;color:#111;width:184.0px;overflow:hidden;transform:scaleY(1.1);transform-origin:0 8.2px">D:\project25365\Analyze\CorrelationSepalLengthSepalWidth</div>
<div class="t" style="left:780px;top:283.89px;font-size:8.1px;line-height:10.72px;color:#111;width:184.0px;overflow:hidden;transform:scaleY(1.1);transform-origin:0 8.2px">D:\project25365\Analyze\NormalityPetalLength</div>
<div class="t" style="left:780px;top:294.61px;font-size:8.1px;line-height:10.72px;color:#111;width:184.0px;overflow:hidden;transform:scaleY(1.1);transform-origin:0 8.2px">D:\project25365\Analyze\NormalityPetalWidth</div>
<div class="t" style="left:780px;top:305.33px;font-size:8.1px;line-height:10.72px;color:#111;width:184.0px;overflow:hidden;transform:scaleY(1.1);transform-origin:0 8.2px">D:\project25365\Analyze\NormalitySepalLength</div>
<div class="t" style="left:780px;top:316.05px;font-size:8.1px;line-height:10.72px;color:#111;width:184.0px;overflow:hidden;transform:scaleY(1.1);transform-origin:0 8.2px">D:\project25365\Analyze\NormalitySepalWidth</div>
<div class="t" style="left:780px;top:326.77px;font-size:8.1px;line-height:10.72px;color:#111;width:184.0px;overflow:hidden;transform:scaleY(1.1);transform-origin:0 8.2px">D:\project25365\Analyze\Scatterplot</div>
<div class="t" style="left:780px;top:337.49px;font-size:8.1px;line-height:10.72px;color:#111;width:184.0px;overflow:hidden;transform:scaleY(1.1);transform-origin:0 8.2px">D:\project25365\Analyze\WilcoxonPetalLengthPetalWidth</div>
<div class="t" style="left:780px;top:348.21px;font-size:8.1px;line-height:10.72px;color:#111;width:184.0px;overflow:hidden;transform:scaleY(1.1);transform-origin:0 8.2px">D:\project25365\Analyze\WilcoxonSepalLengthSepalWidth</div>
<!-- /LISTS -->
</body></html>
